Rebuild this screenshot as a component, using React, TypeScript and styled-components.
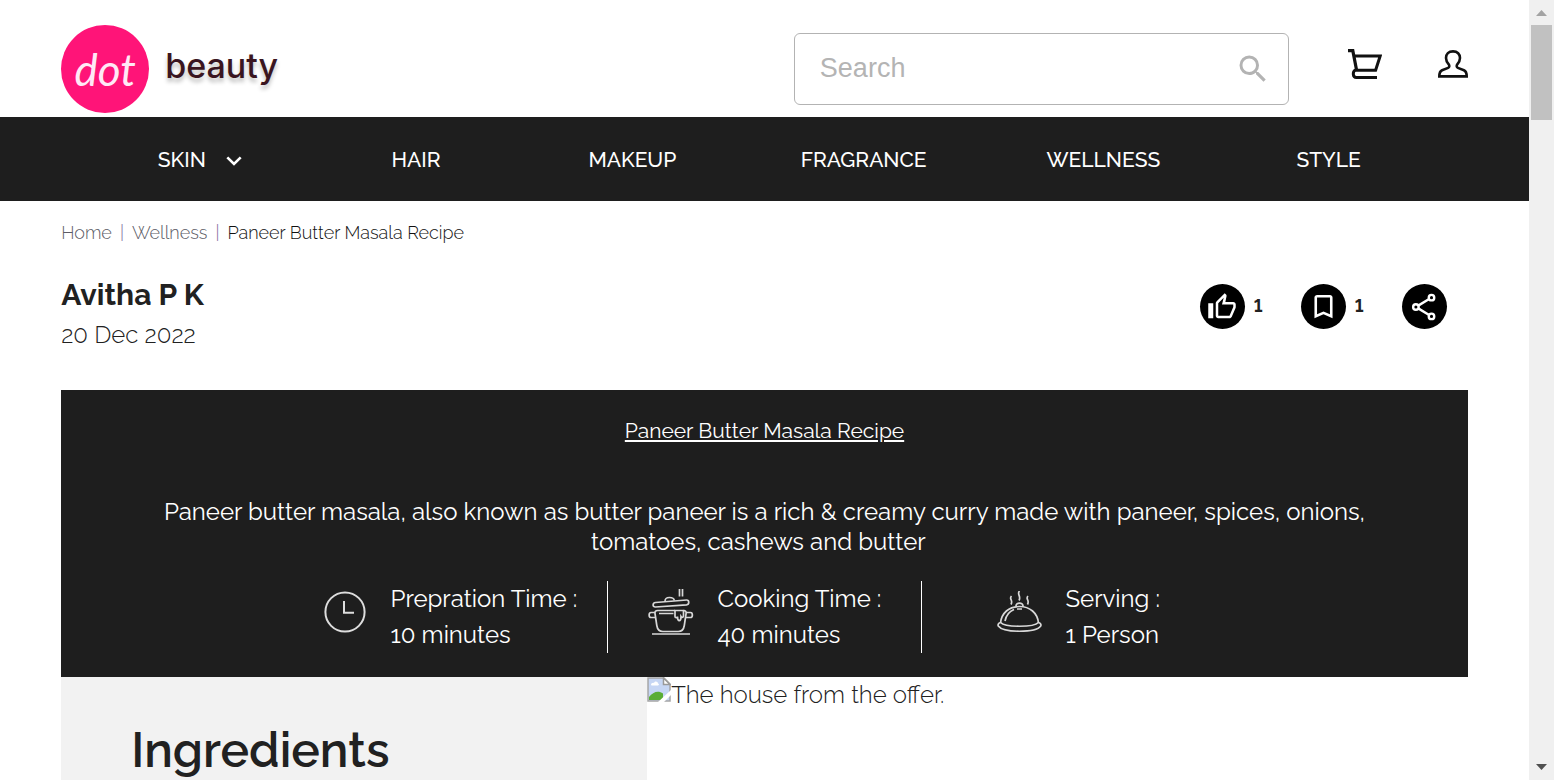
import React from "react";
import styled, { createGlobalStyle } from "styled-components";

const GlobalStyle = createGlobalStyle`
  * { box-sizing: border-box; }
  body {
    margin: 0;
    background: #fff;
    color: #212121;
    font-family: Raleway, Lato, "Open Sans", sans-serif;
    font-size: 24px;
    line-height: 30px;
  }
  h1, h2, p, dl, dt, dd, ol { margin: 0; padding: 0; font-weight: 400; }
  a { color: inherit; text-decoration: none; }
  button { font: inherit; color: inherit; border: 0; padding: 0; background: none; cursor: pointer; }
`;

const Screen = styled.div`
  display: flex;
  height: 100vh;
  overflow: hidden;
`;

const Page = styled.div`
  flex: 1;
  min-width: 0;
  overflow: hidden;
`;

const Header = styled.header`
  display: flex;
  align-items: flex-start;
  justify-content: space-between;
  height: 117px;
  padding: 25px 4% 0;
`;

const Logo = styled.a`
  display: flex;
  align-items: center;
  gap: 16px;
`;

const LogoMark = styled.span`
  display: grid;
  place-items: center;
  width: 88px;
  height: 88px;
  border-radius: 50%;
  background: #ff1478;
  color: #ffe9f6;
  font: italic 400 44px/60px Lato, sans-serif;
`;

const LogoName = styled.span`
  padding-bottom: 6px;
  color: #3a1520;
  font: 500 34px/40px Inter, sans-serif;
  text-shadow: 0 4px 4px rgba(0, 0, 0, 0.25);
`;

const Tools = styled.div`
  display: flex;
  align-items: center;
  padding-top: 8px;
`;

const SearchBox = styled.form`
  display: flex;
  align-items: center;
  width: 495px;
  height: 72px;
  padding: 0 17px 0 25px;
  border: 1px solid #b3b3b3;
  border-radius: 6px;
`;

const SearchInput = styled.input`
  flex: 1;
  min-width: 0;
  padding: 0 0 2px;
  border: 0;
  outline: 0;
  background: none;
  font: 27px/32px "Liberation Sans", sans-serif;
  color: #333;
  &::placeholder { color: #b4b4b4; opacity: 1; }
`;

const IconButton = styled.button<{ $gap?: number }>`
  display: grid;
  place-items: center;
  margin-left: ${(p) => p.$gap ?? 0}px;
`;

const HeaderIcons = styled.div`
  display: flex;
  padding-bottom: 11px;
`;

const Nav = styled.nav`
  display: grid;
  grid-template-columns: 216fr 216fr 216fr 246fr 233fr 217fr;
  align-items: center;
  height: 84px;
  padding: 2px 6% 0;
  background: #1e1e1e;
  color: #fff;
`;

const NavLink = styled.a`
  display: flex;
  align-items: center;
  justify-content: center;
  gap: 20px;
  font-size: 21px;
  font-weight: 500;
`;

const NavChevron = styled.svg`
  width: 16px;
  height: 10px;
  margin-top: 2px;
`;

const Breadcrumb = styled.ol`
  display: flex;
  list-style: none;
  padding: 20px 4% 0;
  font-size: 18px;
  line-height: 24px;
  font-weight: 300;
`;

const Crumb = styled.li<{ $current?: boolean }>`
  color: ${(p) => (p.$current ? "#111" : "#5c5c66")};
  &:not(:first-child)::before { content: "|"; padding: 0 8px; color: #7d6a9a; }
`;

const Byline = styled.div`
  display: flex;
  justify-content: space-between;
  padding: 34px 4% 0;
`;

const Author = styled.h2`
  font-size: 30px;
  line-height: 32px;
  font-weight: 700;
`;

const PostDate = styled.p`
  padding-top: 8px;
  line-height: 32px;
  font-weight: 300;
`;

const Actions = styled.div`
  display: flex;
  gap: 36px;
  padding: 5px 21px 0 0;
`;

const Action = styled.div`
  display: flex;
  align-items: center;
  gap: 9px;
  height: 45px;
`;

const Count = styled.span`
  width: 11px;
  padding-bottom: 2px;
  font-size: 18px;
  line-height: 24px;
  font-weight: 700;
  font-variant-numeric: lining-nums;
`;

const RoundButton = styled.button`
  display: grid;
  place-items: center;
  width: 45px;
  height: 45px;
  border-radius: 50%;
  background: #000;
  color: #fff;
`;

const Article = styled.main`
  padding: 39px 4% 0;
`;

const Banner = styled.section`
  height: 287px;
  padding: 26px 7% 0;
  background: #1e1e1e;
  color: #fff;
  text-align: center;
`;

const Title = styled.h1`
  font-size: 21px;
  line-height: 30px;
  text-decoration: underline;
`;

const Summary = styled.p`
  padding: 51px 0 24px;
`;

const Facts = styled.dl`
  display: flex;
  justify-content: center;
  text-align: left;
`;

const Fact = styled.div<{ $width: number; $lead: number; $gap: number }>`
  display: flex;
  align-items: center;
  width: ${(p) => p.$width}px;
  height: 72px;
  padding-left: ${(p) => p.$lead}px;
  gap: ${(p) => p.$gap}px;
  line-height: 36px;
  &:not(:first-child) { border-left: 1px solid #fff; }
  > svg { margin-bottom: 10px; }
`;

const Columns = styled.div`
  display: flex;
`;

const Ingredients = styled.section`
  width: 586px;
  min-height: 400px;
  padding: 44px 70px;
  background: #f2f2f2;
`;

const SectionTitle = styled.h2`
  font-size: 48px;
  line-height: 58px;
  font-weight: 600;
`;

const MissingImage = styled.div`
  display: flex;
  align-items: flex-start;
  line-height: 36px;
  font-weight: 300;
`;

const ScrollTrack = styled.div`
  display: flex;
  flex-direction: column;
  width: 25px;
  padding: 0 2px;
  background: #f0f0f0;
`;

const ScrollArrow = styled.svg`
  display: block;
  width: 21px;
  height: 25px;
`;

const ScrollThumb = styled.div`
  height: 95px;
  margin-bottom: auto;
  background: #c1c1c1;
`;

const SearchIcon = () => (
  <svg width="36" height="36" viewBox="0 0 24 24" fill="#b3b3b3">
    <path d="M15.5 14h-.79l-.28-.27A6.471 6.471 0 0 0 16 9.5 6.5 6.5 0 1 0 9.5 16c1.61 0 3.09-.59 4.23-1.57l.27.28v.79l5 4.99L20.49 19l-4.99-5zm-6 0C7.01 14 5 11.99 5 9.5S7.01 5 9.5 5 14 7.01 14 9.5 11.99 14 9.5 14z" />
  </svg>
);

const CartIcon = () => (
  <svg width="34" height="30" viewBox="0 0 34 30" fill="none" stroke="#111">
    <path d="M0 1.6h4.800l3.800 19.600" strokeWidth="3.200" />
    <path d="M6 6.900h26.200l-4.600 14.300H7.400c-3 1.400-2.800 7.200.9 7.200h20.700" strokeWidth="3" />
  </svg>
);

const UserIcon = () => (
  <svg width="30" height="28" viewBox="0 0 30 28" fill="none" stroke="#111" strokeWidth="2.600">
    <path d="M15 1.400c-4.400 0-7 2.600-7 6.600 0 2.900 1.300 4.700 2.700 6.300.9 1.300.9 3-.6 3.600L4.100 20.200C2 21.100 1.300 23 1.300 26.400h27.400c0-3.400-.7-5.300-2.800-6.200l-6-2.300c-1.500-.6-1.500-2.300-.6-3.600 1.400-1.600 2.700-3.400 2.700-6.300 0-4-2.600-6.600-7-6.600z" />
  </svg>
);

const ClockIcon = () => (
  <svg width="42" height="42" viewBox="0 0 42 42" fill="none" stroke="#ddd" strokeWidth="2">
    <circle cx="21" cy="21" r="19.600" />
    <path d="M20 10v11.700h10" />
  </svg>
);

const PotIcon = () => (
  <svg width="46" height="46" viewBox="0 0 46 46" fill="none" stroke="#d8d8d8" strokeWidth="1.700">
    <path d="M31.500 0v7.500M34.500 0v7.500" />
    <path d="M7.500 13.500l31-2.500c3-.2 3 4.500 0 4.800l-31 2.200c-3.200.2-3.200-4.200 0-4.500z" />
    <path d="M17 12.500c0-3 1-4 4.500-4s4.500.8 4.800 3" />
    <path d="M27 21.500H9.500c-1.800 0-2.800 1-2.500 3l1.800 12c.6 3.800 2.500 6 6 6h15.500c3.500 0 5.400-2.200 6-6l1.800-12c.3-2-.7-3-2.500-3M11 24.500h14.500" />
    <path d="M7 23.500H3c-2.500 0-2.500 5 0 5h4.500M38 23.500h4.500c2.500 0 2.500 5 0 5H38" />
    <path d="M27 21.500v6c0 1.500 2.500 1.500 2.500 0 0 5.500 3.500 5.500 3.500 0 1 1.500 2.500 1 2.500-1v-5z" />
    <path d="M4 45h38" />
  </svg>
);

const ClocheIcon = () => (
  <svg width="45" height="42" viewBox="0 0 45 42" fill="none" stroke="#d8d8d8" strokeWidth="1.700">
    <path d="M14.500 5c-3 3 2 4-.5 8.500M22.500 0c-3 3.500 2 5-.5 9.500M31 5c-3 3 2 4-.5 8.500" />
    <path d="M19 15.500c-.5-4.500 7.500-4.500 7 0" />
    <path d="M3.500 32C4.500 22 12 15.500 22.500 15.500S40.500 22 41.500 32" />
    <path d="M8 30c1-5 4-9.500 9-11.500M20 18h5" />
    <path d="M3.500 31.500C1 32 .8 34 1.300 35c5 7 37.400 7 42.400 0 .5-1 .3-3-2.200-3.500-5 5-33 5-38 0z" />
  </svg>
);

const BrokenImageIcon = () => (
  <svg width="24" height="25" viewBox="0 0 24 25">
    <path d="M1 1h16l6 6v17H1z" fill="#c6d6f4" stroke="#a5a5a5" strokeWidth="1.500" />
    <path d="M16.500 1v6.500H23z" fill="#fff" stroke="#999" strokeWidth="1.500" />
    <path d="M4 8c0-2 2-2.500 3-2 1-2.500 4-1.500 4 .5 1 0 1.500 1.500 0 2H5C4.300 8.500 4 8.300 4 8z" fill="#fff" />
    <path d="M2 20c4-5 9-7 14-3.500V23H2z" fill="#5aad35" />
    <path d="M11 25l13-12v5l-7 7z" fill="#fff" />
  </svg>
);

const LikeIcon = () => (
  <svg width="30" height="30" viewBox="0 0 24 24" fill="currentColor">
    <path d="M9 21h9c.83 0 1.540-.5 1.840-1.220l3.020-7.050c.09-.23.14-.47.14-.73v-2c0-1.100-.9-2-2-2h-6.310l.95-4.570.03-.32c0-.41-.17-.79-.44-1.060L14.170 1 7.580 7.590C7.220 7.950 7 8.450 7 9v10c0 1.100.9 2 2 2zM9 9l4.340-4.340L12 10h9v2l-3 7H9V9zM1 9h4v12H1z" />
  </svg>
);

const BookmarkIcon = () => (
  <svg width="31" height="31" viewBox="0 0 24 24" fill="currentColor">
    <path d="M17 3H7c-1.100 0-2 .9-2 2v16l7-3 7 3V5c0-1.100-.9-2-2-2zm0 15-5-2.180L7 18V5h10v13z" />
  </svg>
);

const ShareIcon = () => (
  <svg width="30" height="30" viewBox="0 0 24 24" fill="none" stroke="currentColor" strokeWidth="1.900">
    <circle cx="18" cy="4.500" r="2.200" />
    <circle cx="5.500" cy="12" r="2.200" />
    <circle cx="18" cy="19.500" r="2.200" />
    <path d="M7.400 10.900 16.100 5.600M7.400 13.100l8.700 5.300" />
  </svg>
);

export default function App() {
  return (
    <Screen>
      <GlobalStyle />
      <Page>
        <Header>
          <Logo href="#home">
            <LogoMark>dot</LogoMark>
            <LogoName>beauty</LogoName>
          </Logo>
          <Tools>
            <SearchBox role="search">
              <SearchInput type="text" placeholder="Search" aria-label="Search" />
              <IconButton type="button" aria-label="Submit search"><SearchIcon /></IconButton>
            </SearchBox>
            <HeaderIcons>
              <IconButton $gap={59} aria-label="Cart"><CartIcon /></IconButton>
              <IconButton $gap={56} aria-label="Account"><UserIcon /></IconButton>
            </HeaderIcons>
          </Tools>
        </Header>
        <Nav>
          <NavLink href="#skin">
            SKIN
            <NavChevron viewBox="0 0 16 10" fill="none" stroke="#fff" strokeWidth="2.600">
              <path d="M1.300 1.300 8 8l6.700-6.700" />
            </NavChevron>
          </NavLink>
          <NavLink href="#hair">HAIR</NavLink>
          <NavLink href="#makeup">MAKEUP</NavLink>
          <NavLink href="#fragrance">FRAGRANCE</NavLink>
          <NavLink href="#wellness">WELLNESS</NavLink>
          <NavLink href="#style">STYLE</NavLink>
        </Nav>
        <Breadcrumb>
          <Crumb><a href="#home">Home</a></Crumb>
          <Crumb><a href="#wellness">Wellness</a></Crumb>
          <Crumb $current>Paneer Butter Masala Recipe</Crumb>
        </Breadcrumb>
        <Byline>
          <div>
            <Author>Avitha P K</Author>
            <PostDate>20 Dec 2022</PostDate>
          </div>
          <Actions>
            <Action><RoundButton aria-label="Like"><LikeIcon /></RoundButton><Count>1</Count></Action>
            <Action><RoundButton aria-label="Bookmark"><BookmarkIcon /></RoundButton><Count>1</Count></Action>
            <Action><RoundButton aria-label="Share"><ShareIcon /></RoundButton></Action>
          </Actions>
        </Byline>
        <Article>
          <Banner>
            <Title>Paneer Butter Masala Recipe</Title>
            <Summary>
              Paneer butter masala, also known as butter paneer is a rich &amp; creamy curry made with paneer, spices, onions, tomatoes, cashews and butter&nbsp;&nbsp;
            </Summary>
            <Facts>
              <Fact $width={314} $lead={31} $gap={25}>
                <ClockIcon />
                <div><dt>Prepration Time :</dt><dd>10 minutes</dd></div>
              </Fact>
              <Fact $width={314} $lead={40} $gap={24}>
                <PotIcon />
                <div><dt>Cooking Time :</dt><dd>40 minutes</dd></div>
              </Fact>
              <Fact $width={316} $lead={75} $gap={24}>
                <ClocheIcon />
                <div><dt>Serving :</dt><dd>1 Person</dd></div>
              </Fact>
            </Facts>
          </Banner>
          <Columns>
            <Ingredients>
              <SectionTitle>Ingredients</SectionTitle>
            </Ingredients>
            <MissingImage>
              <BrokenImageIcon />
              <span>The house from the offer.</span>
            </MissingImage>
          </Columns>
        </Article>
      </Page>
      <ScrollTrack aria-hidden="true">
        <ScrollArrow viewBox="0 0 21 25"><path d="M5 16h11l-5.500-6z" fill="#a3a3a3" /></ScrollArrow>
        <ScrollThumb />
        <ScrollArrow viewBox="0 0 21 25"><path d="M5 9h11l-5.500 6z" fill="#505050" /></ScrollArrow>
      </ScrollTrack>
    </Screen>
  );
}
